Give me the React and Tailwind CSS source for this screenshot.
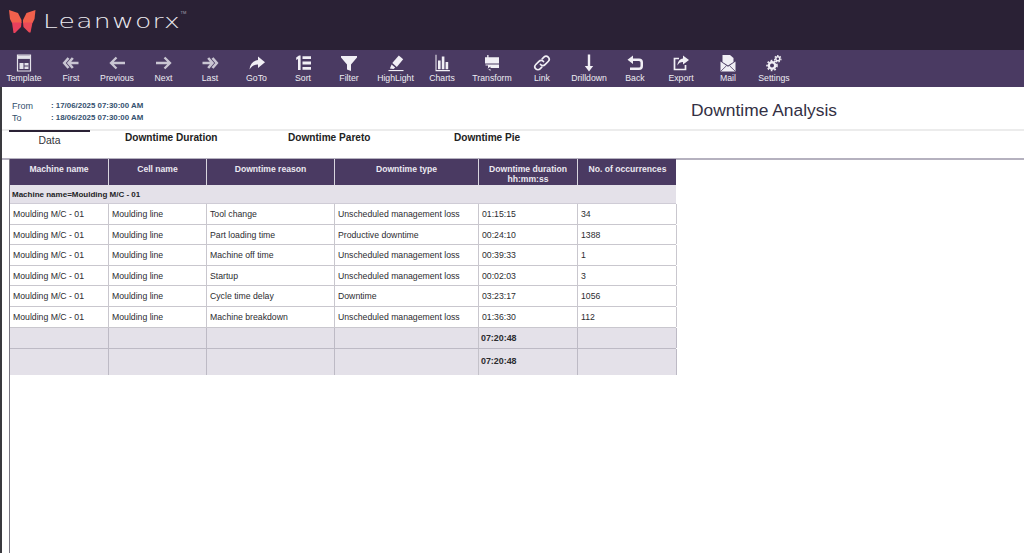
import React from "react";

const I = ({ children, w = 18, h = 18, vb = "0 0 18 18" }) => (
  <svg width={w} height={h} viewBox={vb} fill="currentColor">{children}</svg>
);

const soft = { fill: "none", stroke: "#c9c5d2", strokeLinecap: "butt", strokeLinejoin: "miter" };

const icons = {
  Template: (
    <I>
      <path d="M2.5 1h13v16h-13z" fill="#4a3a62" stroke="#e4e2ea" strokeWidth="1.2" />
      <path d="M3 1.5h12v3.4H3z" fill="#e4e2ea" />
      <path d="M4.5 9h9v6h-9z" fill="#e4e2ea" />
      <path d="M9 9v6M9 12h4.5M4.5 7.3h9" stroke="#4a3a62" strokeWidth="1" />
    </I>
  ),
  First: (
    <I>
      <g {...soft} strokeWidth="2.6">
        <path d="M6.5 4 2.2 9l4.3 5M10.8 4 6.5 9l4.3 5M7.5 9H16.5" />
      </g>
    </I>
  ),
  Previous: (
    <I>
      <g {...soft} strokeWidth="2.3">
        <path d="M8.5 3.5 3 9l5.5 5.5M3.5 9H17" />
      </g>
    </I>
  ),
  Next: (
    <I>
      <g {...soft} strokeWidth="2.3">
        <path d="M9.5 3.5 15 9l-5.5 5.5M14.5 9H1" />
      </g>
    </I>
  ),
  Last: (
    <I>
      <g {...soft} strokeWidth="2.6">
        <path d="M11.5 4 15.8 9l-4.3 5M7.2 4l4.3 5-4.3 5M10.5 9H1.5" />
      </g>
    </I>
  ),
  GoTo: (
    <I>
      <path d="M10 2.5l7 5.7-7 5.8v-3.4C6 10.5 3.5 12 1.5 15.5 2 10.2 5 6.8 10 6z" fill="#f1eff5" />
    </I>
  ),
  Sort: (
    <I>
      <path d="M2.2 3.6 5 1.6h1.6V16H4V5L2.2 6zM8.5 2.2H17v2.8H8.5zM8.5 7.6H17v2.8H8.5zM8.5 13H17v2.8H8.5z" fill="#f1eff5" />
    </I>
  ),
  Filter: (
    <I>
      <path d="M1 2h16v1.6L11 10.5V17l-4-1.5v-5L1 3.6z" fill="#f1eff5" />
    </I>
  ),
  HighLight: (
    <I>
      <path d="M11.8 1.5l4.4 3.8-6.4 7.6-4.5-3.8z" fill="#f1eff5" />
      <path d="M4.6 10.5l3.6 3-1.7 1.4-3.6-.3z" fill="#f1eff5" />
      <path d="M1.5 16h15v1.1h-15z" fill="#f1eff5" />
    </I>
  ),
  Charts: (
    <I>
      <path d="M2.5 0.8h1v15.2h13.4v1.3H2.5zM5 6.5h2.6v8.7H5zM8.8 2.5h2.6v12.7H8.8zM12.6 8h2.6v7.2h-2.6z" fill="#f1eff5" />
    </I>
  ),
  Transform: (
    <I>
      <path d="M5.5 1v2.2H16v6.3H2V3.2h2.2V1z" fill="#f1eff5" />
      <path d="M2.5 10.5H16V14H7.5v-1.5l-3 2.3 3 2.2V15.3H5V11.5H2.5z" fill="#f1eff5" />
    </I>
  ),
  Link: (
    <I>
      <g fill="none" stroke="#f1eff5" strokeWidth="1.7" strokeLinecap="round">
        <path d="M7.5 10.5a3 3 0 0 0 4.5.2l3.2-3.2a3 3 0 0 0-4.3-4.3L9.2 4.9" />
        <path d="M10.5 7.5a3 3 0 0 0-4.5-.2L2.8 10.5a3 3 0 0 0 4.3 4.3l1.7-1.7" />
      </g>
    </I>
  ),
  Drilldown: (
    <I>
      <path d="M7.8 0.5h2.4v11.5h3l-4.2 5.5-4.2-5.5h3z" fill="#f1eff5" />
    </I>
  ),
  Back: (
    <I>
      <path d="M7 1.5v3h6a4 4 0 0 1 4 4V12a4 4 0 0 1-4 4H4v-2.5h9a1.5 1.5 0 0 0 1.5-1.5V8.5A1.5 1.5 0 0 0 13 7H7v3L1.5 5.7z" fill="#f1eff5" />
    </I>
  ),
  Export: (
    <I>
      <g fill="none" stroke="#f1eff5" strokeWidth="1.7">
        <path d="M7 4.5H2.5V15.5h11v-4.5" />
      </g>
      <path d="M11 1.5l6 4.5-6 4.5V8C8.5 8 6.5 9 5.5 11.5 5.5 8 7.5 5 11 4.5z" fill="#f1eff5" />
    </I>
  ),
  Mail: (
    <I>
      <path d="M3.5 8V1h7.5l3.5 3v4L9 11.5z" fill="#f1eff5" />
      <path d="M1.5 7.5 9 12.7l7.5-5.2V17.5h-15z" fill="#f1eff5" />
      <path d="M1.5 17.5l6-5.8M16.5 17.5l-6-5.8" stroke="#4a3a62" strokeWidth=".8" />
    </I>
  ),
  Settings: (
    <I>
      <circle cx="7" cy="11.5" r="3.2" fill="none" stroke="#f1eff5" strokeWidth="2.4" />
      <circle cx="7" cy="11.5" r="5" fill="none" stroke="#f1eff5" strokeWidth="1.6" strokeDasharray="1.7 1.9" />
      <circle cx="12.8" cy="4.8" r="2" fill="none" stroke="#f1eff5" strokeWidth="1.5" />
      <circle cx="12.8" cy="4.8" r="3.2" fill="none" stroke="#f1eff5" strokeWidth="1.2" strokeDasharray="1.4 1.4" />
    </I>
  ),
};

const tools = [
  ["Template", 48], ["First", 46], ["Previous", 46], ["Next", 47], ["Last", 46], ["GoTo", 47], ["Sort", 46],
  ["Filter", 46], ["HighLight", 47], ["Charts", 46], ["Transform", 54], ["Link", 46], ["Drilldown", 48],
  ["Back", 44], ["Export", 48], ["Mail", 46], ["Settings", 46],
];

const rows = [
  ["Tool change", "Unscheduled management loss", "01:15:15", "34", "h-[21px]"],
  ["Part loading time", "Productive downtime", "00:24:10", "1388", "h-[20px]"],
  ["Machine off time", "Unscheduled management loss", "00:39:33", "1", "h-[21px]"],
  ["Startup", "Unscheduled management loss", "00:02:03", "3", "h-[20px]"],
  ["Cycle time delay", "Downtime", "03:23:17", "1056", "h-[21px]"],
  ["Machine breakdown", "Unscheduled management loss", "01:36:30", "112", "h-[21px]"],
];

const grid = "grid grid-cols-[99px_98px_128px_144px_99px_99px]";

const Head = ({ children }) => (
  <div className="flex items-start justify-center border-r border-[#d8d5de] text-center leading-[9.5px] pt-[6px] last:border-r-0">{children}</div>
);

function Logo() {
  return (
    <div className="flex items-center">
      <svg width="27" height="23" viewBox="0 0 27 23">
        <path d="M0 0 9 3l3.5 7v3H3L1 9z" fill="#f2604c" />
        <path d="M26.5 0 17.5 3 14 10v3h9.5l2-4z" fill="#f2604c" />
        <path d="M3 12.5h9.5L12 17l-6 6H4.5z" fill="#e8405c" />
        <path d="M23.5 12.5H14l.5 4.5 5.5 5.5h1.5z" fill="#ea4a58" />
      </svg>
      <span className="ml-[7px] inline-block origin-left scale-x-[1.4] font-['DejaVu_Sans',sans-serif] text-[19px] leading-none font-extralight tracking-[0.9px] text-[#eceaf0]">Leanworx</span>
      <span className="ml-[39px] self-start mt-[1px] text-[4px] leading-none text-[#aaa6b3] font-['Liberation_Sans',sans-serif]">TM</span>
    </div>
  );
}

export default function App() {
  return (
    <div className="h-[553px] w-[1024px] overflow-hidden bg-white font-['Liberation_Sans',Arial,sans-serif] flex flex-col">
      <header className="h-[50px] shrink-0 bg-[#2a2135] pl-[9px] pt-[10px] flex items-start">
        <Logo />
      </header>

      <nav className="h-[37px] shrink-0 bg-[#4a3a62] flex">
        {tools.map(([name, w]) => (
          <div key={name} style={{ width: w }} className="shrink-0 flex flex-col items-center pt-[4px] text-[#eeecf2]">
            <div className="h-[18px] flex items-center justify-center">{icons[name]}</div>
            <span className="text-[8.7px] leading-[10px] mt-[1px] whitespace-nowrap">{name}</span>
          </div>
        ))}
      </nav>

      <div className="flex-1 flex min-h-0">
        <div className="w-[2px] shrink-0 bg-[#3a3a3f]" />
        <main className="flex-1 min-w-0 flex flex-col">
          <div className="h-[42px] shrink-0 flex">
            <div className="w-[689px] shrink-0 pl-[10px] pt-[13px] leading-[12px] text-[#34506e]">
              <div className="flex">
                <span className="w-[39px] text-[9px]">From</span>
                <span className="font-bold text-[7.9px]">: 17/06/2025 07:30:00 AM</span>
              </div>
              <div className="flex">
                <span className="w-[39px] text-[9px]">To</span>
                <span className="font-bold text-[7.9px]">: 18/06/2025 07:30:00 AM</span>
              </div>
            </div>
            <h1 className="pt-[12px] text-[17.4px] leading-[22px] text-[#333044] font-normal">Downtime Analysis</h1>
          </div>

          <div className="h-[27px] shrink-0 border-t-2 border-b-2 border-t-[#ececec] border-b-[#b5b1bf] flex text-[10.1px] font-bold text-[#222] box-content">
            <div className="ml-[7px] w-[81px] -mt-[1px] border-t-[2px] border-t-[#2a2135] text-center pt-[2px] font-normal text-[10.4px] leading-[13px] text-[#33333a]">Data</div>
            <div className="ml-[35px] w-[163px] leading-[13px]">Downtime Duration</div>
            <div className="w-[166px] leading-[13px]">Downtime Pareto</div>
            <div className="leading-[13px]">Downtime Pie</div>
          </div>

          <div className="ml-[7px] w-[667px] -mt-[1px] flex-1 border-l border-l-[#7d7a86] text-[8.7px] text-[#2c2c30]">
            <div className={`${grid} h-[26px] bg-[#4a3a62] text-[#ece9f1] font-bold text-[8.6px]`}>
              <Head>Machine name</Head>
              <Head>Cell name</Head>
              <Head>Downtime reason</Head>
              <Head>Downtime type</Head>
              <Head><span>Downtime duration<br />hh:mm:ss</span></Head>
              <Head>No. of occurrences</Head>
            </div>
            <div className="h-[19px] bg-[#e4e1e9] border-b border-[#cfccd6] flex items-center pl-[2px] pt-[1px] font-bold text-[8px] text-[#232326]">
              Machine name=Moulding M/C - 01
            </div>
            {rows.map(([reason, type, dur, occ, h]) => (
              <div key={reason} className={`${grid} ${h} border-b border-[#c9c7ce]`}>
                {["Moulding M/C - 01", "Moulding line", reason, type, dur, occ].map((c, i) => (
                  <div key={i} className="flex items-center pl-[3px] pt-[2px] border-r border-[#c9c7ce]">{c}</div>
                ))}
              </div>
            ))}
            {["h-[21px]", "h-[26px]"].map((h, r) => (
              <div key={h} className={`${grid} ${h} bg-[#e4e1e9] ${r === 0 ? "border-b border-[#bdbac5]" : ""}`}>
                {["", "", "", "", "07:20:48", ""].map((c, i) => (
                  <div key={i} className={`flex items-center pl-[2px] font-bold text-[8.9px] border-r ${r === 0 ? "pt-[1px]" : ""} ${i === 3 ? "border-[#c4c2ca]" : "border-[#bdbac5]"}`}>{c}</div>
                ))}
              </div>
            ))}
          </div>
        </main>
      </div>
    </div>
  );
}
